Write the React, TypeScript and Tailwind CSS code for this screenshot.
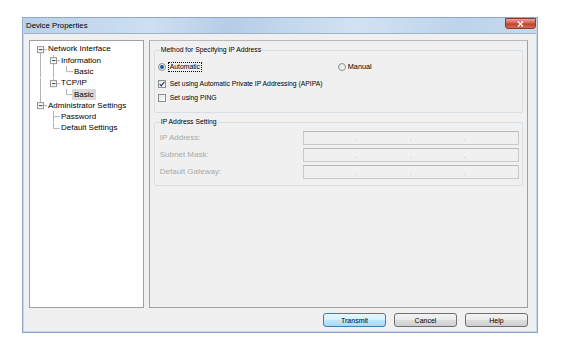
import React from "react";

type CellKind = "blank" | "vert" | "tee" | "ell" | "exp" | "expUp" | "expDown" | "expBoth";

const ROW_H = 11.3;
const LINE = "#b4b4b4";

function TreeCell({ kind }: { kind: CellKind }) {
  const cy = ROW_H / 2;
  const isExp = kind.startsWith("exp");
  const up = kind === "expUp" || kind === "expBoth";
  const down = kind === "expDown" || kind === "expBoth";
  return (
    <svg width={13} height={ROW_H} className="shrink-0">
      {kind === "vert" && <line x1={6.5} y1={0} x2={6.5} y2={ROW_H} stroke={LINE} />}
      {kind === "tee" && (
        <>
          <line x1={6.5} y1={0} x2={6.5} y2={ROW_H} stroke={LINE} />
          <line x1={6.5} y1={cy} x2={13} y2={cy} stroke={LINE} />
        </>
      )}
      {kind === "ell" && (
        <>
          <line x1={6.5} y1={0} x2={6.5} y2={cy} stroke={LINE} />
          <line x1={6.5} y1={cy} x2={13} y2={cy} stroke={LINE} />
        </>
      )}
      {isExp && (
        <>
          {up && <line x1={6.5} y1={0} x2={6.5} y2={cy - 3} stroke={LINE} />}
          {down && <line x1={6.5} y1={cy + 3} x2={6.5} y2={ROW_H} stroke={LINE} />}
          <line x1={10} y1={cy} x2={13} y2={cy} stroke={LINE} />
          <rect x={3.5} y={cy - 3} width={6} height={6} fill="#fafafa" stroke="#949494" />
          <line x1={5} y1={cy} x2={8.5} y2={cy} stroke="#3b3b3b" />
        </>
      )}
    </svg>
  );
}

const treeRows: { cells: CellKind[]; label: string; selected?: boolean }[] = [
  { cells: ["expDown"], label: "Network Interface" },
  { cells: ["vert", "expBoth"], label: "Information" },
  { cells: ["vert", "vert", "ell"], label: "Basic" },
  { cells: ["vert", "expUp"], label: "TCP/IP" },
  { cells: ["vert", "blank", "ell"], label: "Basic", selected: true },
  { cells: ["expUp"], label: "Administrator Settings" },
  { cells: ["blank", "tee"], label: "Password" },
  { cells: ["blank", "ell"], label: "Default Settings" },
];

function Radio({ checked }: { checked?: boolean }) {
  return (
    <span className="w-[8px] h-[8px] rounded-full border border-[#8e8f8f] bg-[linear-gradient(135deg,#e3e3e3,#fbfbfb)] flex items-center justify-center shrink-0">
      {checked && <span className="w-[4px] h-[4px] rounded-full bg-[#1d5ea5]" />}
    </span>
  );
}

function Check({ checked }: { checked?: boolean }) {
  return (
    <span className="w-[8px] h-[8px] border border-[#8e8f8f] bg-[linear-gradient(135deg,#e6e6e6,#fcfcfc)] flex items-center justify-center shrink-0">
      {checked && (
        <svg width="6" height="6" viewBox="0 0 6 6">
          <path d="M0.7 3.2 L2.3 4.9 L5.4 0.8" fill="none" stroke="#1f3b6b" strokeWidth="1.2" />
        </svg>
      )}
    </span>
  );
}

function IpField() {
  return (
    <div className="w-[216px] h-[14px] border border-[#c9c9c9] border-t-[#b9b9b9] bg-[#f0f0f0] flex items-center text-[#a8a8a8] text-[7px] leading-none">
      <span className="flex-1" />
      <span>.</span>
      <span className="flex-1" />
      <span>.</span>
      <span className="flex-1" />
      <span>.</span>
      <span className="flex-1" />
    </div>
  );
}

function Button({ label, primary }: { label: string; primary?: boolean }) {
  return (
    <button
      className={
        primary
          ? "w-[63px] h-[14px] rounded-[3px] border border-[#3c7fb1] bg-[linear-gradient(#eaf6fd,#d9f0fc_50%,#bee6fd_51%,#a7d9f5)] text-[7px] leading-none text-black"
          : "w-[63px] h-[14px] rounded-[3px] border border-[#707070] bg-[linear-gradient(#f2f2f2,#ebebeb_50%,#dddddd_51%,#cfcfcf)] text-[7px] leading-none text-black"
      }
    >
      {label}
    </button>
  );
}

export default function App() {
  return (
    <div className="w-[565px] h-[355px] bg-white pl-[22px] pt-[17px] font-['Liberation_Sans',Arial,sans-serif] text-[8px] leading-none text-black">
      <div className="w-[516px] h-[316px] border border-[#8ea8c9] bg-[#c3d7ed] flex flex-col px-[1px] pb-[1px]">
        {/* Title bar */}
        <div className="h-[15px] flex items-start justify-between bg-[linear-gradient(100deg,#b9d1ea_0%,#cddff2_25%,#b6cde7_40%,#d2e2f3_65%,#bcd3eb_85%,#c6daef_100%)]">
          <span className="pl-[2px] pt-[4px] text-[7.8px] text-black">Device Properties</span>
          <span className="w-[31px] h-[11px] rounded-b-[3px] border border-[#8c3a2c] bg-[linear-gradient(#e8a493,#d1634d_45%,#c0412a_55%,#d36f58)] flex items-center justify-center">
            <svg width="7" height="6" viewBox="0 0 7 6">
              <path d="M1 0.5 L6 5.5 M6 0.5 L1 5.5" stroke="#ffffff" strokeWidth="1.4" />
            </svg>
          </span>
        </div>

        {/* Client area */}
        <div className="flex-1 bg-[#f0f0f0] border-t border-[#9fb2c8] pl-[5px] pr-[8px] pt-[6px] flex flex-col">
          <div className="h-[268px] flex gap-[5px]">
            {/* Tree */}
            <div className="w-[115px] border border-[#a0a0a0] bg-white pl-[4px] pt-[2.7px]">
              {treeRows.map((r, i) => (
                <div key={i} className="flex items-center" style={{ height: ROW_H }}>
                  {r.cells.map((c, j) => (
                    <TreeCell key={j} kind={c} />
                  ))}
                  <span
                    className={
                      r.selected
                        ? "ml-[-1px] px-[2px] h-[11px] flex items-center bg-[#d9d9d9] whitespace-nowrap"
                        : "ml-[1px] whitespace-nowrap"
                    }
                  >
                    {r.label}
                  </span>
                </div>
              ))}
            </div>

            {/* Settings panel */}
            <div className="w-[380px] border border-[#a0a0a0] border-t-[#b9b9b9] bg-[#f0f0f0] px-[4px] text-[6.8px]">
              <fieldset className="mt-[4px] border border-[#d5dfe5] rounded-[2px] pl-[3px] pb-[7px]">
                <legend className="ml-[2px] px-[1px] h-[10px] leading-[10px]">Method for Specifying IP Address</legend>
                <div className="mt-[5px] h-[14px] flex items-center">
                  <div className="w-[180px] flex items-center gap-[2px]">
                    <Radio checked />
                    <span className="border border-dotted border-black px-[1px] py-[1px]">Automatic</span>
                  </div>
                  <div className="flex items-center gap-[2px]">
                    <Radio />
                    <span className="text-[7.3px]">Manual</span>
                  </div>
                </div>
                <div className="mt-[3px] h-[14px] flex items-center gap-[4px]">
                  <Check checked />
                  <span>Set using Automatic Private IP Addressing (APIPA)</span>
                </div>
                <div className="h-[14px] flex items-center gap-[4px]">
                  <Check />
                  <span>Set using PING</span>
                </div>
              </fieldset>

              <fieldset className="mt-[4px] border border-[#d5dfe5] rounded-[2px] pl-[5px] pb-[6px] text-[#a8a8a8]">
                <legend className="ml-[0px] px-[1px] h-[10px] leading-[10px] text-black">IP Address Setting</legend>
                <div className="mt-[4px] flex flex-col gap-[3px] text-[8px]">
                  {["IP Address:", "Subnet Mask:", "Default Gateway:"].map((l) => (
                    <div key={l} className="h-[14px] flex items-center">
                      <span className="w-[143px]">{l}</span>
                      <IpField />
                    </div>
                  ))}
                </div>
              </fieldset>
            </div>
          </div>

          {/* Buttons */}
          <div className="mt-[5px] flex justify-end gap-[8px]">
            <Button label="Transmit" primary />
            <Button label="Cancel" />
            <Button label="Help" />
          </div>
        </div>
      </div>
    </div>
  );
}
